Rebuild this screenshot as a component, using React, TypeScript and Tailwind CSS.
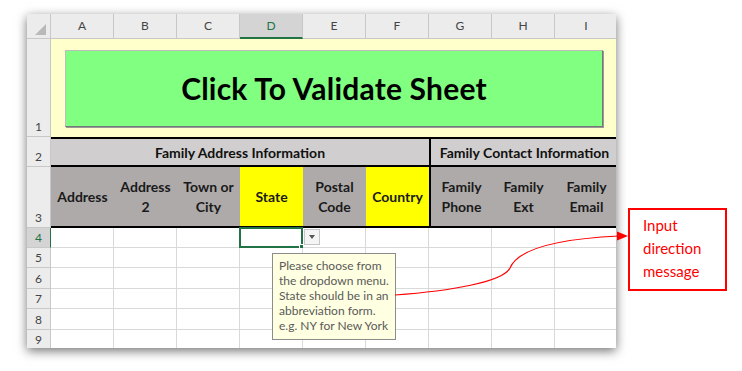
import React from "react";

const cols = ["A", "B", "C", "D", "E", "F", "G", "H", "I"];

const fieldHeaders: { lines: string[]; yellow?: boolean }[] = [
  { lines: ["Address"] },
  { lines: ["Address", "2"] },
  { lines: ["Town or", "City"] },
  { lines: ["State"], yellow: true },
  { lines: ["Postal", "Code"] },
  { lines: ["Country"], yellow: true },
  { lines: ["Family", "Phone"] },
  { lines: ["Family", "Ext"] },
  { lines: ["Family", "Email"] },
];

function RowHead({ n, h, active }: { n: number; h: string; active?: boolean }) {
  return (
    <div
      className={`${h} w-[24px] shrink-0 flex items-end justify-center pb-[1px] border-r border-b border-[#c8c8c8] text-[12px] leading-none ${
        active ? "bg-[#d4d4d4] text-[#217346] border-r-[#217346]" : "bg-[#ececec] text-[#444]"
      }`}
    >
      <span className="pb-[2px]">{n}</span>
    </div>
  );
}

function EmptyRow({ n, h, active }: { n: number; h: string; active?: boolean }) {
  return (
    <div className="flex">
      <RowHead n={n} h={h} active={active} />
      {cols.map((c) => (
        <div key={c} className={`${h} w-[63px] shrink-0 border-r border-b border-[#d9d9d9] bg-white relative`}>
          {active && c === "D" && (
            <div className="absolute -left-[1px] -top-[1px] w-[64px] h-[21px] border-2 border-[#217346]">
              <div className="absolute -right-[4px] -bottom-[4px] w-[6px] h-[6px] bg-[#217346] border border-white" />
            </div>
          )}
          {active && c === "E" && (
            <div className="absolute left-[1px] top-[1px] w-[16px] h-[16px] bg-[#f4f4f4] border border-[#c6c6c6] flex items-center justify-center">
              <div className="w-0 h-0 border-l-[3.5px] border-r-[3.5px] border-t-[4px] border-l-transparent border-r-transparent border-t-[#555]" />
            </div>
          )}
        </div>
      ))}
    </div>
  );
}

export default function App() {
  return (
    <div className="relative w-[742px] h-[371px] bg-white overflow-hidden" style={{ fontFamily: "Lato, 'Open Sans', sans-serif" }}>
      <div className="pl-[27px] pt-[14px]">
        <div className="w-[589px] h-[334px] overflow-hidden bg-white shadow-[0_3px_10px_rgba(0,0,0,0.55)]">
          {/* column letters */}
          <div className="flex h-[25px]">
            <div className="w-[24px] shrink-0 bg-[#ececec] border-r border-b border-[#c8c8c8] flex items-end justify-end pr-[4px] pb-[3px]">
              <svg width="11" height="11" viewBox="0 0 11 11">
                <polygon points="11,0 11,11 0,11" fill="#b9b9b9" />
              </svg>
            </div>
            {cols.map((c) => (
              <div
                key={c}
                className={`w-[63px] shrink-0 flex items-center justify-center text-[12px] border-r border-[#c8c8c8] ${
                  c === "D"
                    ? "bg-[#d4d4d4] text-[#217346] border-b-2 border-b-[#217346]"
                    : "bg-[#ececec] text-[#444] border-b border-b-[#c8c8c8]"
                }`}
              >
                {c}
              </div>
            ))}
          </div>

          {/* row 1: validate button */}
          <div className="flex">
            <RowHead n={1} h="h-[98px]" />
            <div className="h-[98px] w-[567px] shrink-0 bg-[#ffffcc] pl-[14px] pt-[11px]">
              <div className="w-[538px] h-[77px] bg-[#80ff80] border border-[#bdbdbd] border-r-[#777] border-b-[#777] shadow-[1px_1px_0_#999] flex items-center justify-center">
                <span className="text-[30px] font-bold text-black tracking-[0.2px]">Click To Validate Sheet</span>
              </div>
            </div>
          </div>

          {/* row 2: section titles */}
          <div className="flex">
            <RowHead n={2} h="h-[30px]" />
            <div className="h-[30px] w-[378px] shrink-0 bg-[#d0cece] border-t-2 border-b-2 border-black flex items-center justify-center text-[14px] font-bold text-[#111]">
              Family Address Information
            </div>
            <div className="h-[30px] w-[189px] shrink-0 bg-[#d0cece] border-t-2 border-b-2 border-l-2 border-black flex items-center justify-center text-[14px] font-bold text-[#111]">
              Family Contact Information
            </div>
          </div>

          {/* row 3: field headers */}
          <div className="flex">
            <RowHead n={3} h="h-[61px]" />
            {fieldHeaders.map((f, i) => (
              <div
                key={i}
                className={`h-[61px] w-[63px] shrink-0 border-b-2 border-black flex flex-col items-center justify-center text-[14px] leading-[20px] font-bold text-[#1a1a1a] ${
                  f.yellow ? "bg-[#ffff00]" : "bg-[#aeaaaa]"
                } ${i === 6 ? "border-l-2" : ""}`}
              >
                {f.lines.map((l) => (
                  <span key={l}>{l}</span>
                ))}
              </div>
            ))}
          </div>

          <EmptyRow n={4} h="h-[20px]" active />
          <EmptyRow n={5} h="h-[20px]" />
          <EmptyRow n={6} h="h-[21px]" />
          <EmptyRow n={7} h="h-[20px]" />
          <EmptyRow n={8} h="h-[21px]" />
          <EmptyRow n={9} h="h-[20px]" />
        </div>
      </div>

      {/* input message tooltip */}
      <div className="absolute left-[272px] top-[253px] w-[124px] h-[87px] bg-[#ffffe1] border border-[#8c8c8c] pl-[6px] pt-[4px] text-[12px] leading-[15px] text-[#5a5a5a]">
        <div>Please choose from</div>
        <div>the dropdown menu.</div>
        <div>State should be in an</div>
        <div>abbreviation form.</div>
        <div>e.g. NY for New York</div>
      </div>

      {/* annotation */}
      <svg className="absolute left-0 top-0" width="742" height="371" viewBox="0 0 742 371">
        <path d="M395 295 C450 291 503 282 510 268 C515 256 535 240 619 236" fill="none" stroke="#ff0000" strokeWidth="1.2" />
        <polygon points="628,236 617,231.5 617,240.5" fill="#ff0000" />
      </svg>
      <div className="absolute left-[628px] top-[208px] w-[99px] h-[83px] border-2 border-[#ff0000] pl-[13px] pt-[4px] text-[15px] leading-[23px] text-[#ff0000]">
        <div>Input</div>
        <div>direction</div>
        <div>message</div>
      </div>
    </div>
  );
}
